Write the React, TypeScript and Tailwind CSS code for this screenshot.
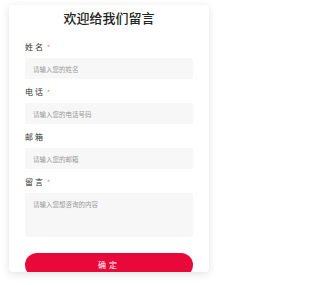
import type { ReactNode } from 'react'

const FONT = { fontFamily: '"Noto Sans CJK SC", "Noto Sans", sans-serif' }

// 表单字段配置
const FIELDS: Array<{ label: string; placeholder: string; required: boolean; multiline?: boolean }> = [
  { label: '姓名', placeholder: '请输入您的姓名', required: true },
  { label: '电话', placeholder: '请输入您的电话号码', required: true },
  { label: '邮箱', placeholder: '请输入您的邮箱', required: false },
  { label: '留言', placeholder: '请输入您想咨询的内容', required: true, multiline: true },
]

function Field({ label, required, children }: { label: string; required: boolean; children: ReactNode }) {
  return (
    <div className="flex flex-col">
      <div className="flex h-[10px] items-center text-[8px] leading-[10px] tracking-[2px] text-[#333]">
        {label}
        {required && <span className="ml-[2px] text-[7px] text-[#f5863f]">*</span>}
      </div>
      <div className="mt-[6px]">{children}</div>
    </div>
  )
}

export default function App() {
  return (
    <div className="min-h-[285px] bg-white pt-[5px] pl-[9px]" style={FONT}>
      <div className="h-[267px] w-[200px] overflow-hidden rounded-[4px] bg-white shadow-[0_2px_8px_rgba(0,0,0,0.12)]">
        <h1 className="pt-[4px] text-center text-[13px] leading-[18px] font-medium text-[#222]">
          欢迎给我们留言
        </h1>
        <form className="mt-[15px] flex flex-col gap-[8px] px-[16px]" onSubmit={(e) => e.preventDefault()}>
          {FIELDS.map((f) => (
            <Field key={f.label} label={f.label} required={f.required}>
              {f.multiline ? (
                <textarea
                  placeholder={f.placeholder}
                  className="block h-[44px] w-full resize-none rounded-[2px] bg-[#f7f7f7] px-[8px] py-[7px] text-[6.5px] leading-[9px] text-[#333] outline-none placeholder:text-[#999]"
                />
              ) : (
                <input
                  placeholder={f.placeholder}
                  className="block h-[21px] w-full rounded-[2px] bg-[#f7f7f7] px-[8px] text-[6.5px] text-[#333] outline-none placeholder:text-[#999]"
                />
              )}
            </Field>
          ))}
          <button
            type="submit"
            className="mt-[8px] h-[24px] w-full rounded-full bg-[#e8083a] text-[8px] tracking-[3px] text-white"
          >
            确定
          </button>
        </form>
      </div>
    </div>
  )
}
